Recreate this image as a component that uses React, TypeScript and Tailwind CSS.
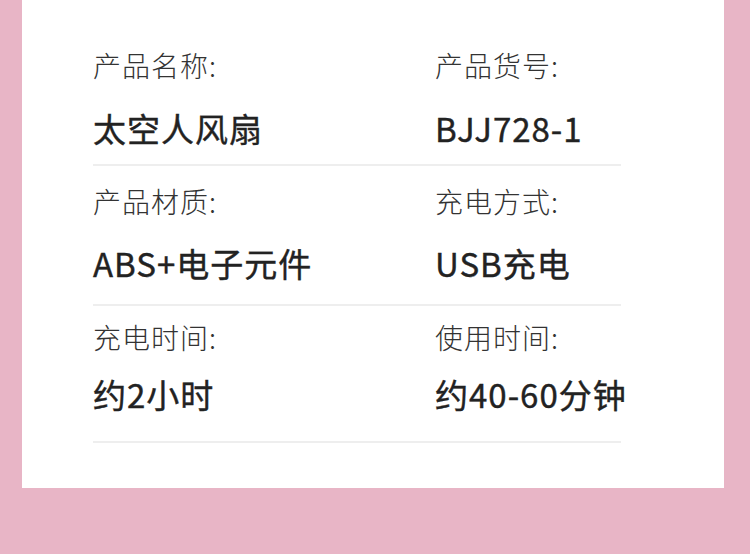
import React from "react";

const rows = [
  {
    a: ["产品名称:", "太空人风扇"],
    b: ["产品货号:", "BJJ728-1"],
    pt: "pt-[45px]",
    pb: "pb-[14px]",
    gap: "mt-[21px]",
  },
  {
    a: ["产品材质:", "ABS+电子元件"],
    b: ["充电方式:", "USB充电"],
    pt: "pt-[15px]",
    pb: "pb-[19px]",
    gap: "mt-[20px]",
  },
  {
    a: ["充电时间:", "约2小时"],
    b: ["使用时间:", "约40-60分钟"],
    pt: "pt-[11px]",
    pb: "pb-[25px]",
    gap: "mt-[15px]",
  },
];

function Cell({ label, value, gap }: { label: string; value: string; gap: string }) {
  return (
    <div className="flex flex-col whitespace-nowrap">
      <div className="h-[40px] text-[28px] leading-[40px] font-light text-[#333333] tracking-[1px]">
        {label}
      </div>
      <div
        className={`${gap} h-[44px] text-[33px] leading-[44px] font-normal text-[#222222] tracking-[1px] [-webkit-text-stroke:0.4px_#222222]`}
      >
        {value}
      </div>
    </div>
  );
}

export default function App() {
  return (
    <div
      className="w-[750px] h-[554px] bg-[#e8b5c6] px-[22px] overflow-hidden"
      style={{ fontFamily: '"Noto Sans CJK SC", "Noto Sans", sans-serif' }}
    >
      <div className="w-[702px] h-[488px] bg-white pl-[71px]">
        <div className="w-[528px]">
          {rows.map((r, i) => (
            <div key={i} className={`${r.pt} ${r.pb} border-b-2 border-[#eeeeee]`}>
              <div className="grid grid-cols-[342px_1fr]">
                <Cell label={r.a[0]} value={r.a[1]} gap={r.gap} />
                <Cell label={r.b[0]} value={r.b[1]} gap={r.gap} />
              </div>
            </div>
          ))}
        </div>
      </div>
    </div>
  );
}
